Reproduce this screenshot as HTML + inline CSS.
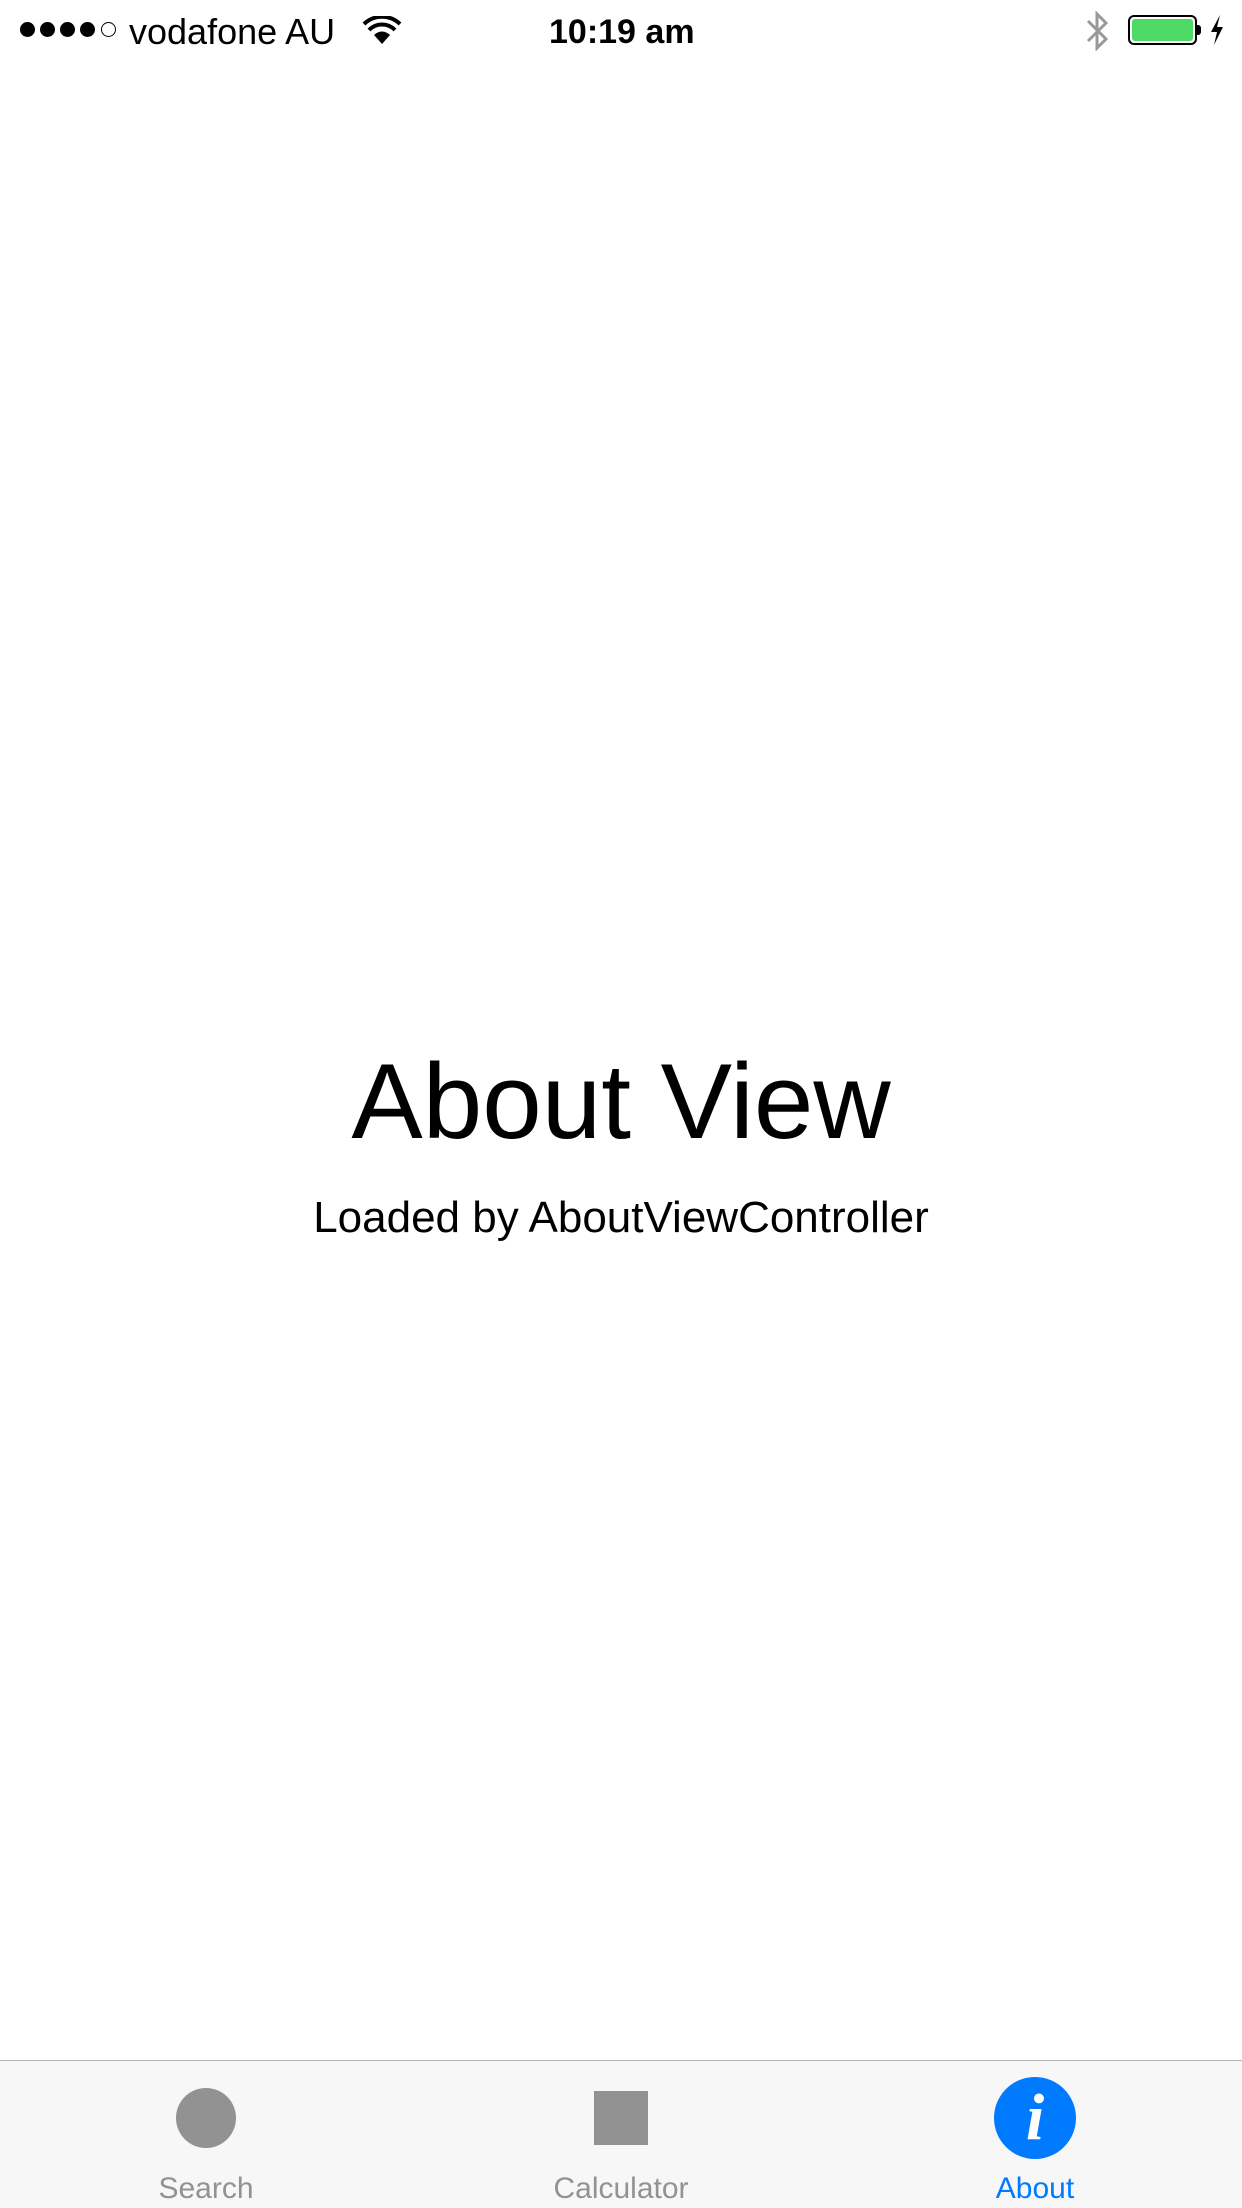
<!DOCTYPE html>
<html><head><meta charset="utf-8"><style>
html,body{margin:0;padding:0;background:#fff;}
body{width:1242px;height:2208px;position:relative;overflow:hidden;font-family:"Liberation Sans",Arial,sans-serif;}
.a{position:absolute;}
.dot{position:absolute;top:22px;width:15px;height:15px;border-radius:50%;background:#000;box-sizing:border-box;}
</style></head><body>
<div class="dot" style="left:20px"></div>
<div class="dot" style="left:40px"></div>
<div class="dot" style="left:60px"></div>
<div class="dot" style="left:80px"></div>
<div class="dot" style="left:101px;border:1.5px solid #000;background:#fff"></div>
<div class="a" style="left:129px;top:8px;font-size:36px;line-height:48px;">vodafone AU</div>
<svg class="a" style="left:362px;top:16px" width="40" height="30" viewBox="0 0 40 30">
<path d="M20 28 L12 19 A11 11 0 0 1 28 19 Z" fill="#000"/>
<path d="M7 14 A18 18 0 0 1 33 14" stroke="#000" stroke-width="4" fill="none"/>
<path d="M2 8 A26 26 0 0 1 38 8" stroke="#000" stroke-width="4" fill="none"/>
</svg>
<div class="a" style="left:549px;top:8px;font-size:34px;font-weight:bold;line-height:48px;">10:19 am</div>
<svg class="a" style="left:1084px;top:11px" width="28" height="40" viewBox="0 0 28 40">
<path d="M4 10 L22 28 L13 37 L13 3 L22 12 L4 30" stroke="#999" stroke-width="3" fill="none"/>
</svg>
<div class="a" style="left:1128px;top:15px;width:69px;height:30px;border:2px solid #000;border-radius:6px;box-sizing:border-box;padding:2px;">
<div style="width:100%;height:100%;background:#4cd964;border-radius:3px"></div></div>
<div class="a" style="left:1197px;top:25px;width:4px;height:10px;background:#000;border-radius:0 3px 3px 0"></div>
<svg class="a" style="left:1210px;top:15px" width="14" height="30" viewBox="0 0 14 30">
<path d="M10 0 L1 17 L7 17 L4 30 L13 12 L7 12 Z" fill="#000"/>
</svg>
<div class="a" style="left:0;width:1242px;top:1036px;text-align:center;font-size:107px;line-height:130px;">About View</div>
<div class="a" style="left:0;width:1242px;top:1190px;text-align:center;font-size:44px;line-height:56px;">Loaded by AboutViewController</div>
<div class="a" style="left:0;top:2060px;width:1242px;height:148px;background:#f7f7f7;border-top:1.5px solid #b2b2b2;box-sizing:border-box;"></div>
<div class="a" style="left:176px;top:2088px;width:60px;height:60px;border-radius:50%;background:#929292"></div>
<div class="a" style="left:594px;top:2091px;width:54px;height:54px;background:#929292"></div>
<div class="a" style="left:994px;top:2077px;width:82px;height:82px;border-radius:50%;background:#007aff;color:#fff;text-align:center;font-family:'Liberation Serif',serif;font-style:italic;font-weight:bold;font-size:66px;line-height:82px;">i</div>
<div class="a" style="left:106px;width:200px;top:2172px;text-align:center;font-size:30px;line-height:34px;color:#929292">Search</div>
<div class="a" style="left:521px;width:200px;top:2172px;text-align:center;font-size:30px;line-height:34px;color:#929292">Calculator</div>
<div class="a" style="left:935px;width:200px;top:2172px;text-align:center;font-size:30px;line-height:34px;color:#007aff">About</div>
</body></html>
